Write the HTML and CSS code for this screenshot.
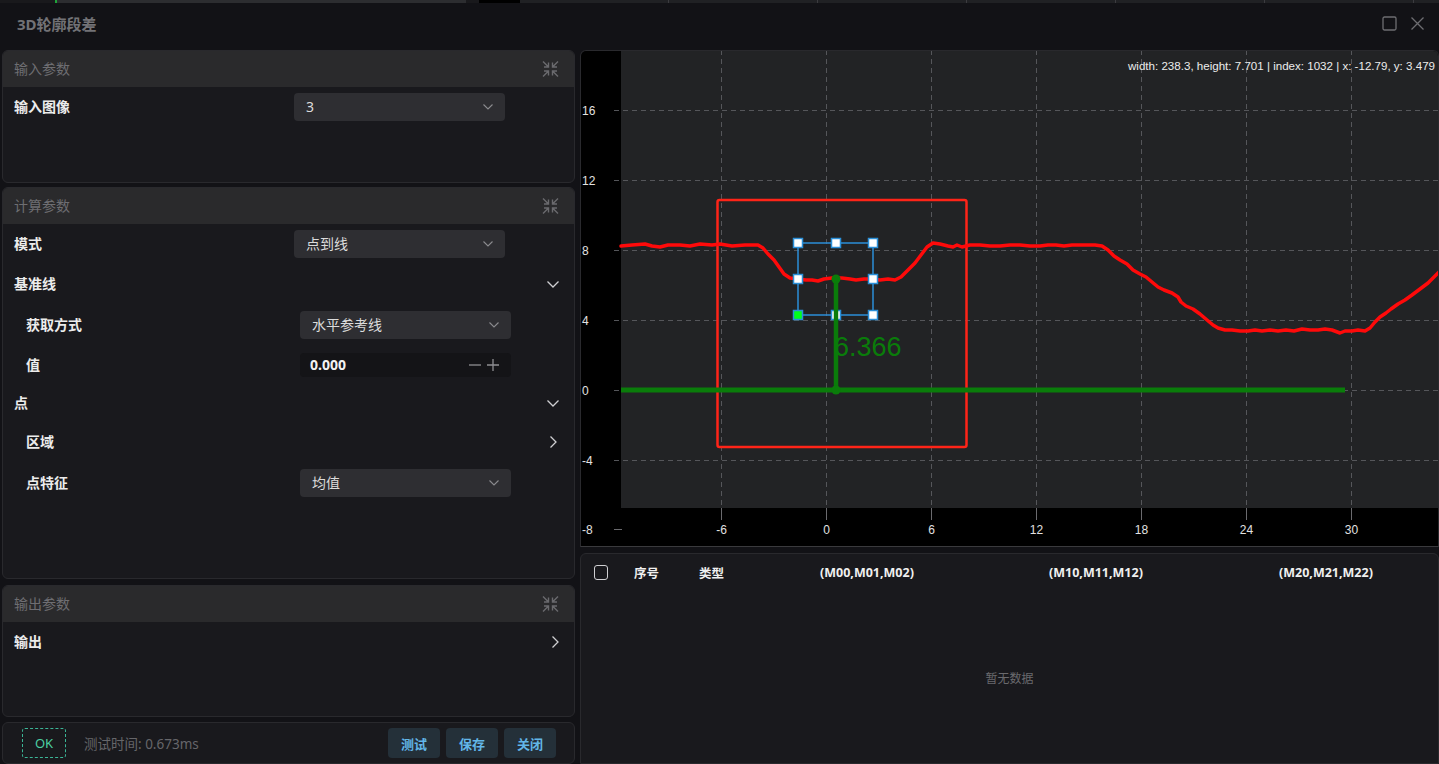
FILE: index.html
```html
<!DOCTYPE html>
<html lang="zh-CN">
<head>
<meta charset="utf-8">
<title>3D轮廓段差</title>
<link rel="stylesheet" href="styles.css">
</head>
<body>
<div class="app-strip">
  <span class="strip-edge"></span><span class="strip-green"></span><span class="strip-tab"></span><span class="strip-space"></span><span class="strip-black"></span><span class="strip-rest"></span>
</div>
<div class="dialog">
  <header class="titlebar">
    <h1 class="title">3D轮廓段差</h1>
    <div class="win-actions">
      <svg class="win-icon" width="15" height="15" viewBox="0 0 15 15"><rect x="1" y="1" width="13" height="13" rx="1.5"/></svg>
      <svg class="win-icon" width="15" height="15" viewBox="0 0 15 15"><path d="M1.5 1.5 13.5 13.5 M13.5 1.5 1.5 13.5"/></svg>
    </div>
  </header>
  <main class="main">
    <section class="left">
      <div class="panel panel-input">
        <div class="panel-head"><span>输入参数</span>
          <svg class="ic-collapse" width="17" height="18" viewBox="0 0 17 18"><path d="M1 1.5 6.5 7 M6.5 2.5V7H2 M16 1.5 10.5 7 M10.5 2.5V7H15 M1 16.5 6.5 11 M2 11H6.5V15.5 M16 16.5 10.5 11 M15 11H10.5V15.5"/></svg>
        </div>
        <div class="panel-body">
          <div class="row"><span class="label">输入图像</span>
            <div class="select"><span>3</span><svg class="chev-sm" width="10" height="6" viewBox="0 0 10 6"><path d="M0.5 0.5 5 5 9.5 0.5"/></svg></div>
          </div>
        </div>
      </div>

      <div class="panel panel-calc">
        <div class="panel-head"><span>计算参数</span>
          <svg class="ic-collapse" width="17" height="18" viewBox="0 0 17 18"><path d="M1 1.5 6.5 7 M6.5 2.5V7H2 M16 1.5 10.5 7 M10.5 2.5V7H15 M1 16.5 6.5 11 M2 11H6.5V15.5 M16 16.5 10.5 11 M15 11H10.5V15.5"/></svg>
        </div>
        <div class="panel-body">
          <div class="row"><span class="label">模式</span>
            <div class="select"><span>点到线</span><svg class="chev-sm" width="10" height="6" viewBox="0 0 10 6"><path d="M0.5 0.5 5 5 9.5 0.5"/></svg></div>
          </div>
          <div class="row group"><span class="label">基准线</span>
            <svg class="chev" width="12" height="7" viewBox="0 0 12 7"><path d="M0.5 0.5 6 6 11.5 0.5"/></svg>
          </div>
          <div class="row sub gap13"><span class="label">获取方式</span>
            <div class="select"><span>水平参考线</span><svg class="chev-sm" width="10" height="6" viewBox="0 0 10 6"><path d="M0.5 0.5 5 5 9.5 0.5"/></svg></div>
          </div>
          <div class="row sub"><span class="label">值</span>
            <div class="number"><span class="num-val">0.000</span>
              <span class="num-btns">
                <svg width="12" height="12" viewBox="0 0 12 12"><path d="M0 6H12"/></svg>
                <svg width="12" height="12" viewBox="0 0 12 12"><path d="M0 6H12 M6 0V12"/></svg>
              </span>
            </div>
          </div>
          <div class="row group short"><span class="label">点</span>
            <svg class="chev" width="12" height="7" viewBox="0 0 12 7"><path d="M0.5 0.5 6 6 11.5 0.5"/></svg>
          </div>
          <div class="row sub group tall"><span class="label">区域</span>
            <svg class="chev" width="7" height="12" viewBox="0 0 7 12"><path d="M0.5 0.5 6 6 0.5 11.5"/></svg>
          </div>
          <div class="row sub"><span class="label">点特征</span>
            <div class="select"><span>均值</span><svg class="chev-sm" width="10" height="6" viewBox="0 0 10 6"><path d="M0.5 0.5 5 5 9.5 0.5"/></svg></div>
          </div>
        </div>
      </div>

      <div class="panel panel-output">
        <div class="panel-head"><span>输出参数</span>
          <svg class="ic-collapse" width="17" height="18" viewBox="0 0 17 18"><path d="M1 1.5 6.5 7 M6.5 2.5V7H2 M16 1.5 10.5 7 M10.5 2.5V7H15 M1 16.5 6.5 11 M2 11H6.5V15.5 M16 16.5 10.5 11 M15 11H10.5V15.5"/></svg>
        </div>
        <div class="panel-body">
          <div class="row group"><span class="label">输出</span>
            <svg class="chev" width="7" height="12" viewBox="0 0 7 12"><path d="M0.5 0.5 6 6 0.5 11.5"/></svg>
          </div>
        </div>
      </div>

      <div class="footer">
        <span class="ok">OK</span>
        <span class="time">测试时间: 0.673ms</span>
        <div class="btns">
          <button class="btn">测试</button>
          <button class="btn">保存</button>
          <button class="btn">关闭</button>
        </div>
      </div>
    </section>

    <section class="right">
      <div class="chart">
        <svg class="chart-svg" width="857" height="495" viewBox="1 1 857 495">
          <rect x="41" y="0" width="818" height="458" fill="#222325"/>
          <g class="grid">
            <line x1="34" y1="60.5" x2="859" y2="60.5"/>
            <line x1="34" y1="130.5" x2="859" y2="130.5"/>
            <line x1="34" y1="200.5" x2="859" y2="200.5"/>
            <line x1="34" y1="270.5" x2="859" y2="270.5"/>
            <line x1="34" y1="340.5" x2="859" y2="340.5"/>
            <line x1="34" y1="410.5" x2="859" y2="410.5"/>
            <line x1="141.5" y1="0" x2="141.5" y2="458"/>
            <line x1="246.5" y1="0" x2="246.5" y2="458"/>
            <line x1="351.5" y1="0" x2="351.5" y2="458"/>
            <line x1="456.5" y1="0" x2="456.5" y2="458"/>
            <line x1="561.5" y1="0" x2="561.5" y2="458"/>
            <line x1="666.5" y1="0" x2="666.5" y2="458"/>
            <line x1="771.5" y1="0" x2="771.5" y2="458"/>
          </g>
          <g class="ticks">
            <line x1="34" y1="479.5" x2="42" y2="479.5"/>
            <line x1="141.5" y1="458" x2="141.5" y2="470"/>
            <line x1="246.5" y1="458" x2="246.5" y2="470"/>
            <line x1="351.5" y1="458" x2="351.5" y2="470"/>
            <line x1="456.5" y1="458" x2="456.5" y2="470"/>
            <line x1="561.5" y1="458" x2="561.5" y2="470"/>
            <line x1="666.5" y1="458" x2="666.5" y2="470"/>
            <line x1="771.5" y1="458" x2="771.5" y2="470"/>
          </g>
          <g class="ylab">
            <text x="2" y="64.5">16</text>
            <text x="2" y="134.5">12</text>
            <text x="2" y="204.5">8</text>
            <text x="2" y="274.5">4</text>
            <text x="2" y="344.5">0</text>
            <text x="2" y="414.5">-4</text>
            <text x="2" y="483.5">-8</text>
          </g>
          <g class="xlab">
            <text x="141.5" y="483.5">-6</text>
            <text x="246.5" y="483.5">0</text>
            <text x="351.5" y="483.5">6</text>
            <text x="456.5" y="483.5">12</text>
            <text x="561.5" y="483.5">18</text>
            <text x="666.5" y="483.5">24</text>
            <text x="771.5" y="483.5">30</text>
          </g>
          <rect class="roi" x="137.5" y="150" width="249" height="247" rx="2"/>
          <polyline class="profile" points="41,196 52,195 65,194 72,196 80,197 88,195 100,195 110,196 120,194 132,195 140,194 152,196 165,195 178,195 183,198 188,204 194,210 199,217 204,224 210,228 218,229 226,230 232,230 238,231 244,229 252,228 262,228 270,229 276,230 284,229 292,229 300,230 308,229 315,230 321,227 328,220 335,213 341,205 347,197 353,193 360,194 368,196 373,197 377,195 382,197 390,195 400,195 410,196 420,196 430,195 440,195 450,196 460,196 468,195 476,195 484,196 492,195 502,195 515,195 522,196 528,200 534,206 540,210 547,214 553,220 560,224 566,227 572,232 578,237 584,240 592,243 598,247 601,252 606,256 613,259 620,264 627,270 633,275 638,278 645,280 652,280 660,281 668,281 675,280 682,281 690,280 698,281 706,280 714,281 722,279 730,280 738,280 745,279 752,280 760,283 765,281 772,281 778,280 785,281 790,278 795,272 800,267 806,263 811,259 818,254 825,250 832,245 840,239 848,233 854,227 859,222"/>
          <rect class="sel" x="218" y="193" width="75" height="72"/>
          <g class="handle">
            <rect x="213.5" y="188.5" width="9" height="9"/>
            <rect x="251.5" y="188.5" width="9" height="9"/>
            <rect x="288.5" y="188.5" width="9" height="9"/>
            <rect x="213.5" y="224.5" width="9" height="9"/>
            <rect x="288.5" y="224.5" width="9" height="9"/>
            <rect class="active" x="213.5" y="260.5" width="9" height="9"/>
            <rect x="251.5" y="260.5" width="9" height="9"/>
            <rect x="288.5" y="260.5" width="9" height="9"/>
          </g>
          <line class="base" x1="41" y1="340" x2="765" y2="340"/>
          <line class="meas" x1="256" y1="229" x2="256" y2="340"/>
          <circle class="dot" cx="256" cy="229" r="4.5"/>
          <circle class="dot" cx="256" cy="340" r="4.5"/>
          <text class="meas-val" x="254" y="306">6.366</text>
          <text class="info" x="855" y="20" text-anchor="end" textLength="307" lengthAdjust="spacingAndGlyphs">width: 238.3, height: 7.701 | index: 1032 | x: -12.79, y: 3.479</text>
        </svg>
      </div>
      <div class="table">
        <div class="thead">
          <span class="cell c-check"><span class="checkbox"></span></span>
          <span class="cell c-no">序号</span>
          <span class="cell c-type">类型</span>
          <span class="cell c-m0">(M00,M01,M02)</span>
          <span class="cell c-m1">(M10,M11,M12)</span>
          <span class="cell c-m2">(M20,M21,M22)</span>
        </div>
        <div class="tbody"><span class="empty">暂无数据</span></div>
      </div>
    </section>
  </main>
</div>
</body>
</html>
```

FILE: styles.css
```css
* { box-sizing: border-box; margin: 0; padding: 0; }
html, body { width: 1439px; height: 764px; overflow: hidden; }
body {
  background: #121216;
  font-family: "Noto Sans", "Noto Sans CJK SC", sans-serif;
  font-size: 14px;
  color: #e8e8e8;
}

/* strip of the app behind the dialog */
.app-strip { height: 3px; display: flex; background: #19191c; }
.strip-edge { width: 55px; }
.strip-green { width: 2px; background: #1fa53a; }
.strip-tab { width: 409px; background: #2c2d30; }
.strip-space { width: 13px; }
.strip-black { width: 41px; background: #000; }
.strip-rest { flex: 1; background: #202124 repeating-linear-gradient(90deg, transparent 0 148px, #3c3c40 148px 149px); }

.dialog { height: 761px; display: flex; flex-direction: column; background: #121216; }

.titlebar {
  height: 47px;
  display: flex;
  align-items: center;
  justify-content: space-between;
  padding: 0 14px 6px 17px;
}
.title { font-size: 15px; font-weight: 700; color: #727276; }
.win-actions { display: flex; gap: 13px; }
.win-icon { fill: none; stroke: #6d6d71; stroke-width: 1.3; }

.main { flex: 1; display: flex; gap: 5px; padding-left: 2px; min-height: 0; }

.left { width: 573px; display: flex; flex-direction: column; }

.panel {
  border: 1px solid #29292d;
  border-radius: 6px;
  background: #19191d;
  overflow: hidden;
}
.panel-input { height: 133px; }
.panel-calc { height: 392px; margin-top: 4px; }
.panel-output { height: 132px; margin-top: 6px; }

.panel-head {
  height: 36px;
  display: flex;
  align-items: center;
  justify-content: space-between;
  padding: 0 15px 0 11px;
  background: #2a2a2c;
  color: #6e6e72;
  font-size: 14px;
}
.panel-head span { padding-bottom: 3px; }
.ic-collapse { fill: none; stroke: #6a6a6e; stroke-width: 1.4; }

.panel-body { padding: 6px 15px 0 11px; display: flex; flex-direction: column; }

.row { height: 28px; display: flex; align-items: center; }
.row + .row { margin-top: 12px; }
.row.gap13 { margin-top: 13px; }
.row.short { height: 24px; }
.row.tall { height: 30px; }
.row.group { justify-content: space-between; }
.row.sub { padding-left: 12px; }

.label { width: 280px; font-weight: 700; color: #ececec; padding-bottom: 3px; }
.row.sub .label { width: 274px; }
.row.group .label { width: auto; }

.chev { fill: none; stroke: #cfcfd2; stroke-width: 1.3; }
.row.sub.group .chev { margin-right: 2px; }

.select {
  width: 211px;
  height: 28px;
  background: #2e2e32;
  border-radius: 4px;
  padding: 0 12px 2px;
  display: flex;
  align-items: center;
  justify-content: space-between;
  color: #dcdcdc;
}
.chev-sm { fill: none; stroke: #8a8a8e; stroke-width: 1.1; margin-top: 2px; }

.number {
  width: 211px;
  height: 24px;
  background: #141417;
  border-radius: 4px;
  padding: 0 12px 0 10px;
  display: flex;
  align-items: center;
  justify-content: space-between;
}
.num-val { font-weight: 700; color: #f2f2f2; padding-bottom: 2px; }
.num-btns { display: flex; gap: 6px; }
.num-btns svg { fill: none; stroke: #8e8e92; stroke-width: 1.3; }

.footer {
  height: 42px;
  margin-top: 5px;
  border: 1px solid #29292d;
  border-radius: 6px;
  background: #19191d;
  display: flex;
  align-items: center;
  padding: 0 18px 0 19px;
}
.ok {
  width: 44px;
  height: 30px;
  border: 1px dashed #3bb596;
  border-radius: 3px;
  display: flex;
  align-items: center;
  justify-content: center;
  color: #4ccfa2;
  font-size: 13px;
}
.time { margin-left: 18px; color: #66666a; font-size: 13.5px; padding-bottom: 1px; }
.btns { margin-left: auto; display: flex; gap: 6px; }
.btn {
  width: 52px;
  height: 30px;
  border: none;
  border-radius: 4px;
  background: #243039;
  color: #62b6e8;
  font-family: "Noto Sans CJK SC", sans-serif;
  font-size: 13px;
  font-weight: 700;
}

.right { width: 859px; display: flex; flex-direction: column; gap: 6px; }

.chart {
  height: 497px;
  background: #000;
  border: 1px solid #29292d;
  border-bottom-color: #3a3a3d;
  border-radius: 6px 6px 0 0;
  overflow: hidden;
}
.chart-svg { display: block; font-family: "Liberation Sans", Arial, sans-serif; }
.grid line { stroke: #55565a; stroke-width: 1; stroke-dasharray: 5 4; }
.ticks line { stroke: #6a6a6e; stroke-width: 1; }
.ylab text { fill: #e2e2e2; font-size: 12px; }
.xlab text { fill: #e2e2e2; font-size: 12px; text-anchor: middle; }
.roi { fill: none; stroke: #ff2418; stroke-width: 2.5; }
.profile { fill: none; stroke: #ff0a0a; stroke-width: 3.5; stroke-linejoin: round; stroke-linecap: round; }
.sel { fill: none; stroke: #2b8fd8; stroke-width: 1.5; }
.handle rect { fill: #fff; stroke: #2b8fd8; stroke-width: 1.5; }
.handle rect.active { fill: #00ff1a; }
.base { stroke: #0a7c0a; stroke-width: 5; }
.meas { stroke: #0a7c0a; stroke-width: 4.5; }
.dot { fill: #0a7c0a; }
.meas-val { fill: #0a7c0a; font-size: 27px; }
.info { fill: #ececec; font-size: 11.5px; }

.table {
  flex: 1;
  border: 1px solid #29292d;
  border-radius: 6px 6px 0 0;
  background: #19191d;
  display: flex;
  flex-direction: column;
}
.thead {
  height: 38px;
  display: flex;
  align-items: center;
  padding-left: 13px;
  padding-bottom: 2px;
  font-size: 12.5px;
  font-weight: 700;
  color: #f0f0f0;
}
.cell { display: block; }
.c-check { width: 40px; display: flex; align-items: center; }
.checkbox { width: 14px; height: 15px; border: 1.5px solid #cfcfd2; border-radius: 3px; }
.c-no { width: 65px; }
.c-type { width: 121px; }
.c-m0 { width: 229px; }
.c-m1 { width: 230px; }
.tbody { flex: 1; display: flex; align-items: center; justify-content: center; }
.empty { color: #6a6a6e; font-size: 12px; }
```
